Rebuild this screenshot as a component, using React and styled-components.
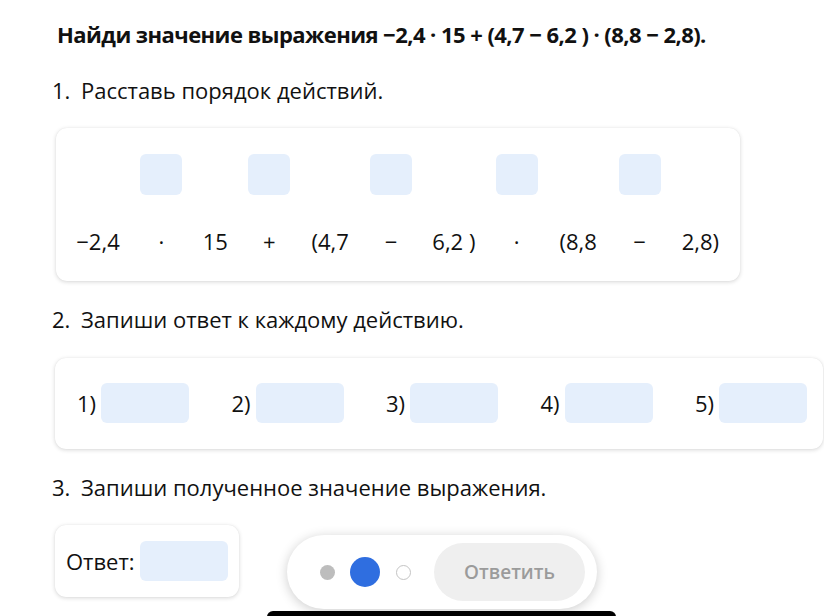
import React from 'react';
import styled, { createGlobalStyle } from 'styled-components';

const GlobalStyle = createGlobalStyle`
  html, body {
    margin: 0;
    padding: 0;
    background: #ffffff;
  }
  body {
    font-family: "Open Sans", "Noto Sans", "DejaVu Sans", sans-serif;
    color: #111111;
    overflow: hidden;
  }
`;

const Page = styled.div`
  position: relative;
  width: 824px;
  height: 616px;
  overflow: hidden;
  display: flex;
  flex-direction: column;
  align-items: flex-start;
`;

const Title = styled.h1`
  margin: 20px 0 0 57px;
  font-size: 22px;
  line-height: 28px;
  font-weight: 700;
  letter-spacing: -0.55px;
  white-space: nowrap;
`;

const Step = styled.div`
  display: flex;
  margin: ${(p) => p.$mt}px 0 0 52px;
  font-size: 22px;
  line-height: 28px;
  white-space: nowrap;
`;

const StepNum = styled.span`
  width: 29px;
`;

const Card = styled.div`
  box-sizing: border-box;
  margin: ${(p) => p.$mt}px 0 0 ${(p) => p.$ml || 55}px;
  background: #ffffff;
  border-radius: 11px;
  box-shadow: 0 1px 4px rgba(0, 0, 0, 0.16), 0 0 1px rgba(0, 0, 0, 0.08);
`;

const OrderCard = styled(Card)`
  width: 684px;
  padding: 26px 21px 26px;
  display: flex;
  gap: 21.4px;
`;

const Token = styled.div`
  display: flex;
  flex-direction: column;
  align-items: center;
  width: ${(p) => p.$w}px;
`;

const Slot = styled.div`
  width: 42px;
  height: 41px;
  border-radius: 6px;
  background: ${(p) => (p.$empty ? 'transparent' : '#e5effc')};
  margin-bottom: 32px;
`;

const TokenText = styled.div`
  font-size: 22px;
  line-height: 28px;
  white-space: pre;
`;

const AnswersCard = styled(Card)`
  width: 768px;
  padding: 25px 16px 26px 22px;
  display: flex;
  justify-content: space-between;
`;

const AnswerItem = styled.div`
  display: flex;
  align-items: center;
  gap: 5px;
`;

const Label = styled.span`
  font-size: 22px;
  line-height: 28px;
`;

const Input = styled.div`
  width: 88px;
  height: 40px;
  border-radius: 6px;
  background: #e5effc;
`;

const ResultCard = styled(Card)`
  width: 184px;
  padding: 16px 11px;
  display: flex;
  align-items: center;
  justify-content: space-between;
`;

const Pill = styled.div`
  position: absolute;
  left: 287px;
  top: 535px;
  box-sizing: border-box;
  width: 310px;
  height: 74px;
  border-radius: 37px;
  background: #ffffff;
  box-shadow: 0 2px 12px rgba(0, 0, 0, 0.2);
  display: flex;
  align-items: center;
  padding: 0 12px 0 33px;
`;

const Dot = styled.span`
  box-sizing: border-box;
  width: ${(p) => p.$size}px;
  height: ${(p) => p.$size}px;
  border-radius: 50%;
  background: ${(p) => p.$bg};
  border: ${(p) => (p.$ring ? '1.5px solid #c4c4c4' : 'none')};
  margin-right: ${(p) => p.$mr}px;
  flex-shrink: 0;
`;

const SubmitButton = styled.button`
  width: 151px;
  height: 58px;
  border: none;
  border-radius: 29px;
  background: #efefef;
  color: #9b9b9b;
  font-family: "Open Sans", "Noto Sans", sans-serif;
  font-size: 19px;
  font-weight: 600;
  padding: 0;
`;

const HomeBar = styled.div`
  position: absolute;
  left: 267px;
  top: 611px;
  width: 349px;
  height: 10px;
  border-radius: 6px 6px 0 0;
  background: #000000;
`;

const tokens = [
  { t: '−2,4', w: 42 },
  { t: '·', op: true },
  { t: '15', w: 23 },
  { t: '+', op: true },
  { t: '(4,7', w: 37 },
  { t: '−', op: true },
  { t: '6,2 )', w: 41 },
  { t: '·', op: true },
  { t: '(8,8', w: 38 },
  { t: '−', op: true },
  { t: '2,8)', w: 37 },
];

export default function App() {
  return (
    <>
      <GlobalStyle />
      <Page>
        <Title>Найди значение выражения −2,4 · 15 + (4,7 − 6,2 ) · (8,8 − 2,8).</Title>

        <Step $mt={28}>
          <StepNum>1.</StepNum>
          <span>Расставь порядок действий.</span>
        </Step>
        <OrderCard $mt={24} $ml={56}>
          {tokens.map((tok, i) => (
            <Token key={i} $w={tok.op ? 42 : tok.w}>
              <Slot $empty={!tok.op} />
              <TokenText>{tok.t}</TokenText>
            </Token>
          ))}
        </OrderCard>

        <Step $mt={24}>
          <StepNum>2.</StepNum>
          <span>Запиши ответ к каждому действию.</span>
        </Step>
        <AnswersCard $mt={25}>
          {[1, 2, 3, 4, 5].map((n) => (
            <AnswerItem key={n}>
              <Label>{n})</Label>
              <Input />
            </AnswerItem>
          ))}
        </AnswersCard>

        <Step $mt={24}>
          <StepNum>3.</StepNum>
          <span>Запиши полученное значение выражения.</span>
        </Step>
        <ResultCard $mt={24}>
          <Label>Ответ:</Label>
          <Input />
        </ResultCard>

        <Pill>
          <Dot $size={15} $bg="#bdbdbd" $mr={15} />
          <Dot $size={30} $bg="#2f6ee0" $mr={16} />
          <Dot $size={15} $bg="#ffffff" $ring $mr={23} />
          <SubmitButton>Ответить</SubmitButton>
        </Pill>
        <HomeBar />
      </Page>
    </>
  );
}
